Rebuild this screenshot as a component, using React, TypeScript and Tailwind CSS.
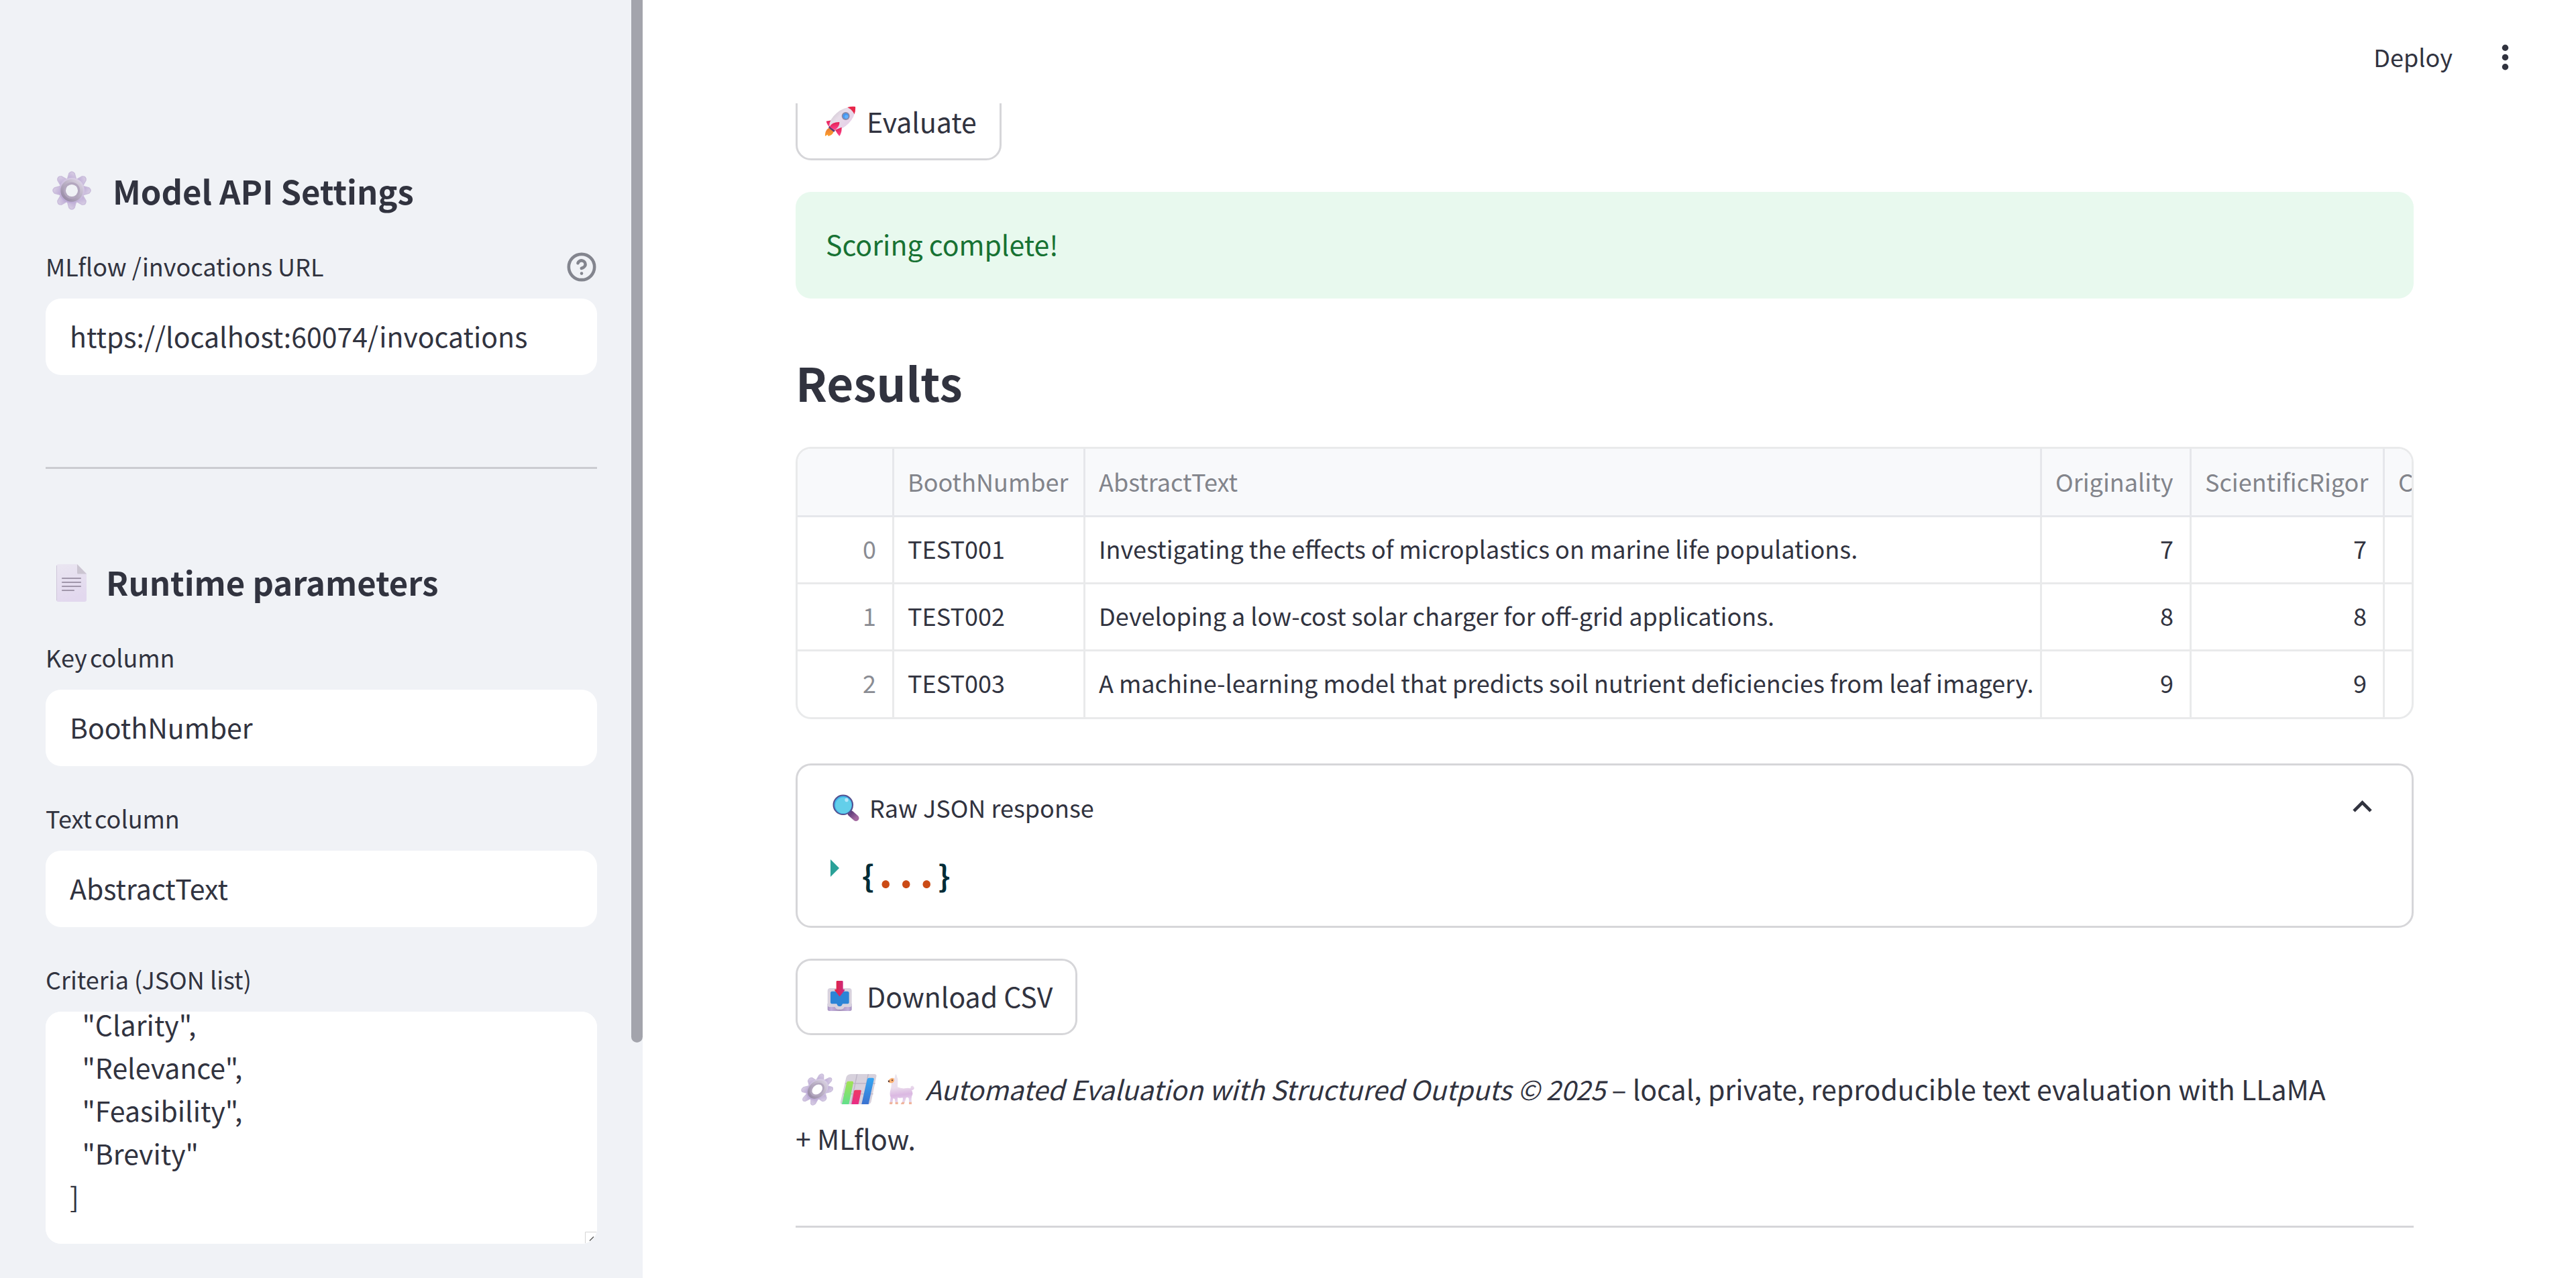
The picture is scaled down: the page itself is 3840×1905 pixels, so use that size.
import { useEffect, useRef } from "react";
import type { ReactNode } from "react";

/* ---------- Emoji drawings ---------- */

const TEETH = [0, 45, 90, 135, 180, 225, 270, 315];

function Gear({ className, tilt = 0 }: { className: string; tilt?: number }) {
  return (
    <svg viewBox="0 0 64 64" className={className} aria-hidden="true">
      <defs>
        <linearGradient id={`gear-a-${tilt}`} x1="0.8" y1="0" x2="0.2" y2="1">
          <stop offset="0" stopColor="#dcd3e6" />
          <stop offset="1" stopColor="#b9a6d4" />
        </linearGradient>
        <linearGradient id={`gear-b-${tilt}`} x1="0.9" y1="0.1" x2="0.2" y2="0.9">
          <stop offset="0" stopColor="#d9d2e0" />
          <stop offset="1" stopColor="#988ba6" />
        </linearGradient>
      </defs>
      <g transform={tilt ? "translate(9.5 0) skewX(-16)" : undefined}>
        <g fill={`url(#gear-a-${tilt})`}>
          {TEETH.map((a) => (
            <path key={a} d="M27.6 3.5Q32-1.5 36.4 3.5L40 16H24Z" transform={`rotate(${a} 32 32)`} stroke="#c9bcdb" strokeWidth="1.6" strokeLinejoin="round" />
          ))}
          <circle cx="32" cy="32" r="21" />
        </g>
        <circle cx="32" cy="32" r="18.5" fill={`url(#gear-b-${tilt})`} />
        <circle cx="32" cy="32" r="13.5" fill="#b3a7bf" />
        <circle cx="32" cy="32" r="10" fill={tilt ? "#fff" : "#f0f2f6"} />
      </g>
    </svg>
  );
}

function DocumentPage() {
  return (
    <svg viewBox="0 0 64 64" className="size-16" aria-hidden="true">
      <defs>
        <linearGradient id="doc" x1="0" y1="0" x2="0.3" y2="1">
          <stop offset="0" stopColor="#eae6f1" />
          <stop offset="1" stopColor="#e2d8ee" />
        </linearGradient>
      </defs>
      <path d="M12 6H40L54 20V59Q54 62 51 62H12Q9 62 9 59V9Q9 6 12 6Z" fill="url(#doc)" />
      <path d="M9.5 8V60" stroke="#cfc6da" />
      <path d="M40 6L54 20.5H41.5Q40 20.5 40 19Z" fill="#cbc5d1" />
      <path d="M18 27H45M18 33H45M18 39H45M18 45H35" stroke="#a096aa" strokeWidth="2.2" strokeLinecap="round" />
    </svg>
  );
}

function Rocket() {
  return (
    <svg viewBox="26 12 171 171" className="size-[57px]" aria-hidden="true">
      <defs>
        <linearGradient id="rk-body" x1="0.1" y1="0.2" x2="0.8" y2="0.8">
          <stop offset="0" stopColor="#cfc6d0" />
          <stop offset="0.4" stopColor="#e8dde9" />
          <stop offset="1" stopColor="#e6cfe8" />
        </linearGradient>
        <linearGradient id="rk-fin" x1="0.3" y1="0" x2="0.5" y2="1">
          <stop offset="0" stopColor="#e01d50" />
          <stop offset="1" stopColor="#ff4690" />
        </linearGradient>
        <linearGradient id="rk-fire" x1="0" y1="0" x2="0" y2="1">
          <stop offset="0" stopColor="#e57a35" />
          <stop offset="1" stopColor="#ffa02c" />
        </linearGradient>
      </defs>
      <path d="M64 128Q52 134 48 150Q46 160 47 165L58 158L61 165Q80 160 84 147L88 140Z" fill="url(#rk-fire)" />
      <path d="M85 92L52 98Q54 108 60 117L66 124Z" fill="url(#rk-fin)" />
      <path d="M66 120Q64 92 98 62Q132 32 182 33Q184 76 152 108Q122 138 92 138Z" fill="url(#rk-body)" />
      <path d="M147 36Q165 31 182 33Q184 48 178 67Q168 45 147 36Z" fill="#e8274a" />
      <path d="M66 119L92 140L86 146L62 127Z" fill="#5b3a78" />
      <path d="M67 123Q78 101 111 102Q113 122 90 138Z" fill="url(#rk-fin)" />
      <path d="M92 137L121 125Q122 150 111 165Q102 155 92 137Z" fill="url(#rk-fin)" />
      <circle cx="139" cy="75" r="18" fill="#8b8aa6" />
      <circle cx="139" cy="75" r="13" fill="#4596ef" />
      <circle cx="142" cy="78" r="8" fill="#62b0fb" />
    </svg>
  );
}

function Magnifier() {
  return (
    <svg viewBox="0 0 50 50" className="size-[50px]" aria-hidden="true">
      <defs>
        <linearGradient id="mg-h" x1="0" y1="0" x2="1" y2="1">
          <stop offset="0" stopColor="#66407c" />
          <stop offset="1" stopColor="#a2689f" />
        </linearGradient>
      </defs>
      <path d="M34 34.5L42 41.5" stroke="url(#mg-h)" strokeWidth="9" strokeLinecap="round" />
      <path d="M30.5 32L33.5 35" stroke="#6a4a8a" strokeWidth="3" />
      <circle cx="22.8" cy="21.8" r="15.3" fill="#54508f" />
      <circle cx="22.8" cy="21.8" r="13.2" fill="#3fb4ea" />
      <circle cx="23.3" cy="22.6" r="12" fill="#63cfea" />
      <ellipse cx="28" cy="14.4" rx="2.6" ry="2.8" fill="#b5e6fa" />
    </svg>
  );
}

function InboxTray() {
  return (
    <svg viewBox="103 45 171 171" className="size-[57px]" aria-hidden="true">
      <defs>
        <linearGradient id="tr-front" x1="0" y1="0" x2="1" y2="0">
          <stop offset="0" stopColor="#a793c0" />
          <stop offset="0.15" stopColor="#c3b0dc" />
          <stop offset="0.5" stopColor="#a48fb8" />
          <stop offset="0.85" stopColor="#c3b0dc" />
          <stop offset="1" stopColor="#a793c0" />
        </linearGradient>
        <linearGradient id="tr-arrow" x1="0" y1="0" x2="1" y2="0">
          <stop offset="0" stopColor="#e4233c" />
          <stop offset="1" stopColor="#c92b88" />
        </linearGradient>
      </defs>
      <path d="M135 165V190Q135 198 143 198H235Q243 198 243 190V165Z" fill="url(#tr-front)" />
      <path d="M147 96H231Q243 96 243 108V170Q243 180 233 180H210Q207 190 196 191H181Q171 190 168 180H145Q135 180 135 170V108Q135 96 147 96Z" fill="#d8d2de" />
      <path d="M155 110H223Q231 110 231 118V158Q231 166 223 166H204Q201 166 200 170Q198 176 192 177H186Q179 176 178 170Q177 166 174 166H156Q148 166 148 158V118Q148 110 155 110Z" fill="#2c84d6" />
      <path d="M178 63H200Q204 63 204 67V101H210Q213 103 211 106L191 131Q189 133 187 131L167 106Q165 103 168 101H174V67Q174 63 178 63Z" fill="url(#tr-arrow)" />
    </svg>
  );
}

function BarChart({ className }: { className: string }) {
  return (
    <svg viewBox="180 484 195 135" className={className} aria-hidden="true">
      <defs>
        <linearGradient id="bc-g" x1="0" y1="0" x2="0" y2="1">
          <stop offset="0" stopColor="#a2e255" />
          <stop offset="1" stopColor="#62e08c" />
        </linearGradient>
        <linearGradient id="bc-r" x1="0" y1="0" x2="0" y2="1">
          <stop offset="0" stopColor="#ee3a64" />
          <stop offset="1" stopColor="#e82c86" />
        </linearGradient>
        <linearGradient id="bc-b" x1="0" y1="0" x2="0" y2="1">
          <stop offset="0" stopColor="#34a5f2" />
          <stop offset="1" stopColor="#3c72d0" />
        </linearGradient>
      </defs>
      <path d="M247 484H352Q364 484 361 496L338 608Q335 619 323 619H208Q199 619 201 607L226 500Q230 485 247 484Z" fill="#d7d1dc" />
      <path d="M275 484L248 619M325 484L298 619M222 526H356M212 573H347" stroke="#bdb5c6" strokeWidth="4" />
      <path d="M236 516H253Q260 516 258 524L238 619H207L228 523Q229 516 236 516Z" fill="url(#bc-g)" />
      <path d="M268 555H288Q295 555 293 562L281 619H250L261 561Q262 555 268 555Z" fill="url(#bc-r)" />
      <path d="M328 501H345Q352 501 350 509L326 619H295L320 508Q322 501 328 501Z" fill="url(#bc-b)" />
    </svg>
  );
}

function Llama({ className }: { className: string }) {
  return (
    <svg viewBox="375 484 177 135" className={className} aria-hidden="true">
      <defs>
        <linearGradient id="ll" x1="0.3" y1="0" x2="0.4" y2="1">
          <stop offset="0" stopColor="#ece7ee" />
          <stop offset="0.45" stopColor="#eadcec" />
          <stop offset="0.7" stopColor="#dbb8e2" />
          <stop offset="1" stopColor="#eadff0" />
        </linearGradient>
      </defs>
      <path
        d="M444 501Q443 488 448 484Q454 489 454 499Q458 504 457 514L456 542Q470 549 488 548Q504 545 512 548Q517 546 514 542Q516 536 524 537Q531 540 530 549Q527 556 519 556Q526 568 522 578Q518 583 518 594L519 619H508L506 592Q500 585 494 590Q492 602 483 619H471Q482 604 479 590Q466 592 456 590L457 619H447L443 595L436 593L432 619H421L425 588Q419 573 424 555Q430 538 428 522Q416 523 413 517Q416 506 431 501Z"
        fill="url(#ll)"
      />
      <path d="M421 609H434L432 619H420ZM446 609H458V619H446ZM476 609H488L484 619H470ZM507 609H519V619H507Z" fill="#f0b49c" />
      <path d="M432 501Q442 503 441 513Q438 524 427 524Q415 524 413 516Q418 505 432 501Z" fill="#fbb071" />
      <path d="M413 513L421 513L418 521Q413 519 413 513Z" fill="#3b2a35" />
      <circle cx="432" cy="512" r="3" fill="#3b2a35" />
    </svg>
  );
}

/* ---------- Form pieces ---------- */

const LABEL = "text-[36px] leading-[40px]";
const FIELD =
  "h-[114px] w-full rounded-[23px] bg-white px-9 pb-1 text-[41px] leading-[64px] text-[#31333f] outline-none";
const PUSH =
  "flex h-[114px] w-fit items-center gap-3 rounded-[23px] border-[3px] border-[#d6d6d9] bg-white px-[34px] pb-1 text-[41px] leading-[64px]";

function Field({ id, label, value, help }: { id: string; label: string; value: string; help?: ReactNode }) {
  return (
    <div className="flex flex-col gap-[29px]">
      <div className="flex h-[40px] items-center justify-between">
        <label htmlFor={id} className={LABEL}>
          {label}
        </label>
        {help}
      </div>
      <input id={id} type="text" defaultValue={value} className={FIELD} />
    </div>
  );
}

const CRITERIA = `[
  "Originality",
  "ScientificRigor",
  "Clarity",
  "Relevance",
  "Feasibility",
  "Brevity"
]`;

function CriteriaField() {
  const box = useRef<HTMLTextAreaElement>(null);
  useEffect(() => {
    if (box.current) box.current.scrollTop = box.current.scrollHeight;
  }, []);
  return (
    <div className="flex flex-col gap-[29px]">
      <label htmlFor="criteria" className={LABEL}>
        Criteria (JSON list)
      </label>
      <div className="relative h-[346px] overflow-hidden rounded-[23px] bg-white">
        <textarea
          id="criteria"
          ref={box}
          defaultValue={CRITERIA}
          className="block h-full w-full resize-none bg-white px-9 py-10 text-[41px] leading-[64px] text-[#31333f] outline-none [scrollbar-width:none]"
        />
        <svg viewBox="0 0 18 18" className="absolute right-0 bottom-0 size-[18px]" fill="none" aria-hidden="true">
          <path d="M.5 17V.5H17" stroke="#d5d5d5" />
          <path d="M7 13.5L13 7.5" stroke="#555" strokeWidth="1.4" />
        </svg>
      </div>
    </div>
  );
}

function Sidebar() {
  return (
    <aside className="relative h-full w-[958px] shrink-0 overflow-hidden bg-[#f0f2f6] px-[68px] pt-[254px]">
      <h2 className="flex h-[60px] items-center gap-[22px] text-[49px] leading-[60px] font-semibold">
        <span className="flex w-[78px] justify-center">
          <Gear className="size-[58px]" />
        </span>
        Model API Settings
      </h2>
      <div className="mt-[62px]">
        <Field
          id="url"
          label="MLflow /invocations URL"
          value="https://localhost:60074/invocations"
          help={
            <button type="button" aria-label="Help" className="pt-1">
              <svg viewBox="0 0 24 24" className="size-[46px]" fill="none" stroke="#83858e" strokeWidth="2.4" strokeLinecap="round" strokeLinejoin="round">
                <circle cx="12" cy="12" r="10" />
                <path d="M9.09 9a3 3 0 0 1 5.83 1c0 2-3 3-3 3" />
                <path d="M12 17h.01" />
              </svg>
            </button>
          }
        />
      </div>
      <hr className="mt-[137px] border-t-[3px] border-[#cbccd1]" />
      <h2 className="mt-[138px] flex h-[60px] items-center gap-3 text-[49px] leading-[60px] font-semibold">
        <span className="flex w-[78px] justify-center">
          <DocumentPage />
        </span>
        Runtime parameters
      </h2>
      <div className="mt-[62px] flex flex-col gap-[57px]">
        <Field id="key" label={"Key\u202Fcolumn"} value="BoothNumber" />
        <Field id="text" label={"Text\u202Fcolumn"} value="AbstractText" />
        <CriteriaField />
      </div>
      <div className="absolute top-0 right-0 h-[81.6%] w-[17px] rounded-b-full bg-[#a3a4ac]" />
    </aside>
  );
}

/* ---------- Results ---------- */

const ROWS = [
  ["TEST001", "Investigating the effects of microplastics on marine life populations.", 7, 7, 7],
  ["TEST002", "Developing a low-cost solar charger for off-grid applications.", 8, 8, 8],
  ["TEST003", "A machine-learning model that predicts soil nutrient deficiencies from leaf imagery.", 9, 9, 9],
];

const HEAD = ["", "BoothNumber", "AbstractText", "Originality", "ScientificRigor", "Clarity"];

function ResultsTable() {
  return (
    <div className="mt-[54px] overflow-hidden rounded-[23px] border-[3px] border-[#e9eaeb]">
      <table className="w-[2600px] table-fixed border-separate border-spacing-0 text-[36px] leading-[40px]">
        <colgroup>
          <col className="w-[144px]" />
          <col className="w-[285px]" />
          <col className="w-[1426px]" />
          <col className="w-[223px]" />
          <col className="w-[288px]" />
          <col />
        </colgroup>
        <thead>
          <tr className="h-[102px] bg-[#f8f9fb] text-left text-[#82848b]">
            {HEAD.map((h) => (
              <th key={h} scope="col" className="border-r-[3px] border-b-[3px] border-[#e6e7eb] pb-1 pl-5 font-normal whitespace-nowrap">
                {h}
              </th>
            ))}
          </tr>
        </thead>
        <tbody>
          {ROWS.map((row, i) => (
            <tr key={i} className="group h-[100px] last:h-[98px]">
              <th scope="row" className="border-r-[3px] border-b-[3px] border-[#e9eaeb] pr-6 pb-[6px] text-right font-normal text-[#8a8c93] group-last:border-b-0">
                {i}
              </th>
              {row.map((cell, j) => (
                <td
                  key={j}
                  className={
                    "border-r-[3px] border-b-[3px] border-[#e9eaeb] pb-[6px] whitespace-nowrap group-last:border-b-0 " +
                    (typeof cell === "number" ? "pr-6 text-right" : "pl-5")
                  }
                >
                  {cell}
                </td>
              ))}
            </tr>
          ))}
        </tbody>
      </table>
    </div>
  );
}

function RawJson() {
  return (
    <details open className="mt-[66px] rounded-[23px] border-[3px] border-[#d6d6d9] px-[45px] pt-[33px] pb-[45px]">
      <summary className="flex h-[57px] cursor-pointer list-none items-center gap-3 text-[36px] leading-[40px]">
        <Magnifier />
        Raw JSON response
        <svg viewBox="0 0 24 24" className="ml-auto size-[57px]" fill="#31333f" aria-hidden="true">
          <path d="M12 8l-6 6 1.41 1.41L12 10.83l4.59 4.58L18 14z" />
        </svg>
      </summary>
      <div className="mt-[42px] flex h-[62px] items-start gap-8 pl-1">
        <svg viewBox="0 0 13 26" className="mt-2 h-[26px] w-[13px]" fill="#2aa198" aria-hidden="true">
          <path d="M0 0L13 13L0 26Z" />
        </svg>
        <div className="flex items-baseline font-['Noto_Sans_Mono_CJK_SC','Liberation_Mono',monospace] text-[44px] leading-[48px] font-bold text-[#002b36]">
          <span>{"{"}</span>
          <span className="text-[61px] text-[#cb4b16]">...</span>
          <span>{"}"}</span>
        </div>
      </div>
    </details>
  );
}

function Main() {
  return (
    <main className="flex h-full min-w-0 flex-1 flex-col bg-white">
      <header className="flex h-[154px] shrink-0 items-center justify-end pt-[17px] pr-[77px]">
        <button type="button" className="pb-1 text-[36px] leading-[40px]">
          Deploy
        </button>
        <button type="button" aria-label="Menu" className="ml-[50px] flex w-[57px] justify-center">
          <svg viewBox="0 0 24 24" className="size-[57px]" fill="#31333f" aria-hidden="true">
            <circle cx="12" cy="6" r="2" />
            <circle cx="12" cy="12" r="2" />
            <circle cx="12" cy="18" r="2" />
          </svg>
        </button>
      </header>
      <div className="min-h-0 flex-1 overflow-hidden pr-[242px] pl-[228px]">
        <div className="-mt-[29px]">
          <button type="button" className={PUSH}>
            <Rocket />
            Evaluate
          </button>
          <div role="alert" className="mt-[47px] flex h-[159px] items-center rounded-[23px] bg-[#e8f9ee] px-[45px] pb-1.5 text-[41px] leading-[64px] text-[#177233]">
            Scoring complete!
          </div>
          <h1 className="mt-[81px] text-[69px] leading-[86px] font-semibold">Results</h1>
          <ResultsTable />
          <RawJson />
          <button type="button" className={PUSH + " mt-[46px]"}>
            <InboxTray />
            Download CSV
          </button>
          <p className="mt-[43px] text-[41px] leading-[73px]">
            <Gear tilt={1} className="mr-1 ml-2 inline size-12 align-[-8px]" />
            <BarChart className="inline h-[45px] w-[65px] align-[-6px]" />
            <Llama className="inline h-[45px] w-[59px] align-[-6px]" />{" "}
            <em className="text-[40px]">Automated Evaluation with Structured Outputs © 2025</em> – local, private,
            reproducible text evaluation with LLaMA +{"\u00A0"}MLflow.
          </p>
          <hr className="mt-[94px] border-t-[3px] border-[#d6d6d9]" />
        </div>
      </div>
    </main>
  );
}

export default function App() {
  return (
    <div className="flex h-screen w-full overflow-hidden font-['Noto_Sans_CJK_SC',sans-serif] text-[#31333f]">
      <Sidebar />
      <Main />
    </div>
  );
}
